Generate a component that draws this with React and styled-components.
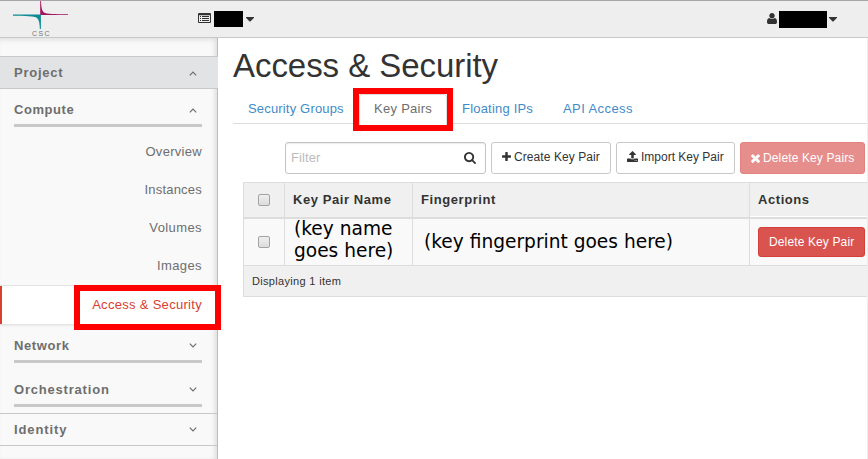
import React from "react";
import styled, { createGlobalStyle, css } from "styled-components";

const GlobalStyle = createGlobalStyle`
  * { box-sizing: border-box; }
  body {
    margin: 0;
    overflow: hidden;
    background: #fff;
    color: #333;
    font-family: "Liberation Sans", Arial, sans-serif;
    font-size: 13px;
  }
`;

const Page = styled.div`
  display: flex;
  flex-direction: column;
  width: 868px;
  height: 459px;
  overflow: hidden;
`;

const TopBar = styled.header`
  position: relative;
  z-index: 1;
  flex: none;
  display: flex;
  align-items: flex-start;
  height: 38px;
  padding: 0 31px 0 13px;
  background: #eee;
  border-top: 1px solid #a6a6a6;
  border-bottom: 1px solid #c8c8c8;
`;

const Brand = styled.div`
  display: flex;
  flex-direction: column;
  align-items: center;
  width: 56px;
  margin-right: 129px;
`;

const BrandName = styled.span`
  margin: 1px 0 0 1px;
  font-size: 7px;
  line-height: 7px;
  letter-spacing: 1.4px;
  color: #777;
`;

const TopMenu = styled.div`
  display: flex;
  align-items: flex-start;
  padding-top: 10px;
  margin-left: ${(p) => (p.$end ? "auto" : 0)};
`;

const Redacted = styled.span`
  width: ${(p) => p.$w}px;
  height: ${(p) => p.$h}px;
  margin: 0 ${(p) => p.$after}px 0 ${(p) => p.$gap}px;
  background: #000;
`;

const Glyph = styled.svg`
  display: block;
  flex: none;
  fill: currentColor;
  margin-top: ${(p) => p.$top || 0}px;
`;

const Body = styled.div`
  flex: 1;
  display: flex;
  min-height: 0;
`;

const Sidebar = styled.nav`
  flex: none;
  width: 218px;
  padding-top: 18px;
  background: #f9f9f9;
  border-right: 1px solid #bdbdbd;
  box-shadow: inset -4px 0 5px -2px #ddd, inset 0 5px 5px -3px #e2e2e2;
  color: #6e6e6e;
`;

const heading = css`
  display: flex;
  justify-content: space-between;
  font-size: 13px;
  font-weight: bold;
  line-height: 16px;
`;

const Dashboard = styled.div`
  ${heading}
  height: 33px;
  padding: 8px 20px 0 14px;
  border-top: 1px solid #c8c8c8;
  border-bottom: 1px solid #c8c8c8;
  ${(p) => p.$open && css`
    margin-right: -1px;
    padding-right: 21px;
    background: #e2e3e5;
  `}
`;

const Panel = styled.div`
  ${heading}
  height: ${(p) => p.$h}px;
  margin: ${(p) => p.$mt}px 15px 0 14px;
  padding-right: 5px;
  border-bottom: 3px solid #c9c9c9;
`;

const PanelList = styled.div`
  padding-top: 6px;
  margin-bottom: 13px;
`;

const SectionGap = styled.div`
  height: 6px;
`;

const Label = styled.span`
  letter-spacing: ${(p) => (p.$ls ? `${p.$ls}px` : "normal")};
  white-space: nowrap;
`;

const PanelLink = styled.div`
  position: relative;
  height: 38px;
  padding: 11px 15px 0 0;
  text-align: right;
  line-height: 16px;
  ${(p) => p.$active && css`
    height: 40px;
    background: #fff;
    color: #d9402f;
    border-top: 1px solid #e3e3e3;
    border-bottom: 1px solid #e3e3e3;
    box-shadow: inset 2px 0 #d9402f, 0 1px 2px #e8e8e8;
  `}
`;

const Highlight = styled.div`
  position: absolute;
  z-index: 2;
  left: ${(p) => p.$x}px;
  top: ${(p) => p.$y}px;
  width: ${(p) => p.$w}px;
  height: ${(p) => p.$h}px;
  border: 6px solid #f00;
`;

const Main = styled.main`
  flex: 1;
  min-width: 0;
  padding-left: 15px;
  overflow: hidden;
  border-right: 1px solid #eee;
`;

const Title = styled.h1`
  margin: 9px 0 9px;
  font-size: 33px;
  font-weight: normal;
  line-height: 38px;
  letter-spacing: -0.05px;
  color: #333;
`;

const Tabs = styled.div`
  display: flex;
  height: 30px;
  border-bottom: 1px solid #ddd;
`;

const Tab = styled.div`
  position: relative;
  height: 30px;
  padding: 7px 15px 0;
  line-height: 16px;
  color: #428bca;
  width: ${(p) => p.$w}px;
  ${(p) => p.$active && css`
    height: 31px;
    padding: 6px 14px 0;
    color: #6e6e6e;
    background: #fff;
    border: 1px solid #ddd;
    border-bottom: 0;
    border-radius: 3px 3px 0 0;
  `}
`;

const Toolbar = styled.div`
  display: flex;
  justify-content: flex-end;
  gap: 5px;
  padding: 18px 2px 8px 0;
`;

const FilterBox = styled.div`
  display: flex;
  justify-content: space-between;
  width: 201px;
  height: 32px;
  padding: 7px 9px 0 5px;
  border: 1px solid #c4c4c4;
  border-radius: 3px;
  box-shadow: inset 0 1px 1px #ececec;
  line-height: 16px;
  color: #bbb;
`;

const SearchMark = styled.span`
  color: #333;
`;

const Button = styled.button`
  display: flex;
  flex: none;
  gap: ${(p) => p.$gap ?? 3}px;
  width: ${(p) => p.$w}px;
  height: ${(p) => p.$h || 32}px;
  margin: 0;
  padding: ${(p) => p.$pt || 7}px 0 0 10px;
  border: 1px solid #c8c8c8;
  border-radius: 3px;
  background: #fff;
  color: #333;
  font: 12px/14px "Liberation Sans", Arial, sans-serif;
  ${(p) => p.$danger && css`
    color: #fff;
    background: #d9534f;
    border-color: #d43f3a;
  `}
  ${(p) => p.$disabled && css`opacity: 0.65;`}
`;

const Table = styled.div`
  width: 640px;
  margin-left: 10px;
  border: 1px solid #ddd;
`;

const Row = styled.div`
  display: grid;
  grid-template-columns: 40px 128px 337px 1fr;
  height: ${(p) => (p.$head ? 36 : 46)}px;
  background: ${(p) => (p.$head ? "#f0f0f0" : "#f9f9f9")};
  border-bottom: ${(p) => (p.$head ? 2 : 0)}px solid #ddd;
`;

const Cell = styled.div`
  padding: ${(p) => p.$pt || 0}px 0 0 8px;
  border-left: 1px solid #ddd;
  line-height: 16px;
  font-weight: ${(p) => (p.$bold ? "bold" : "normal")};
  white-space: nowrap;
  &:first-child {
    border-left: 0;
    padding-left: 14px;
  }
  ${(p) => p.$last && css`box-shadow: inset 0 -1px #fff;`}
`;

const Note = styled.div`
  margin: ${(p) => p.$y || 0}px 0 0 ${(p) => p.$x}px;
  font-family: "DejaVu Sans", sans-serif;
  font-size: 18.6px;
  line-height: 22px;
  color: #000;
`;

const Check = styled.div`
  width: 12px;
  height: 12px;
  border: 1px solid #a3a3a3;
  border-radius: 2px;
  background: linear-gradient(#efefef, #dcdcdc);
`;

const Footer = styled.div`
  height: 31px;
  padding: 8px 8px 0;
  border-top: 1px solid #ddd;
  background: #f0f0f0;
  font-size: 11px;
  line-height: 14px;
`;

const paths = {
  search:
    "M1216 832q0-185-131.5-316.5t-316.5-131.5-316.5 131.5-131.5 316.5 131.5 316.5 316.5 131.5 316.5-131.5 131.5-316.5zm512 832q0 52-38 90t-90 38q-54 0-90-38l-343-342q-179 124-399 124-143 0-273.5-55.5t-225-150-150-225-55.5-273.5 55.5-273.5 150-225 225-150 273.5-55.5 273.5 55.5 225 150 150 225 55.5 273.5q0 220-124 399l343 343q37 37 37 90z",
  plus:
    "M1600 736v192q0 40-28 68t-68 28h-416v416q0 40-28 68t-68 28h-192q-40 0-68-28t-28-68v-416h-416q-40 0-68-28t-28-68v-192q0-40 28-68t68-28h416v-416q0-40 28-68t68-28h192q40 0 68 28t28 68v416h416q40 0 68 28t28 68z",
  times:
    "M1490 1322q0 40-28 68l-136 136q-28 28-68 28t-68-28l-294-294-294 294q-28 28-68 28t-68-28l-136-136q-28-28-28-68t28-68l294-294-294-294q-28-28-28-68t28-68l136-136q28-28 68-28t68 28l294 294 294-294q28-28 68-28t68 28l136 136q28 28 28 68t-28 68l-294 294 294 294q28 28 28 68z",
  upload:
    "M1344 1472q0-26-19-45t-45-19-45 19-19 45 19 45 45 19 45-19 19-45zm256 0q0-26-19-45t-45-19-45 19-19 45 19 45 45 19 45-19 19-45zm128-224v320q0 40-28 68t-68 28h-1472q-40 0-68-28t-28-68v-320q0-40 28-68t68-28h427q21 56 70.5 92t110.5 36h256q61 0 110.5-36t70.5-92h427q40 0 68 28t28 68zm-325-648q-17 40-59 40h-256v448q0 26-19 45t-45 19h-256q-26 0-45-19t-19-45v-448h-256q-42 0-59-40-17-39 14-69l448-448q18-19 45-19t45 19l448 448q31 30 14 69z",
  user:
    "M1600 1405q0 120-73 189.5t-194 69.5h-874q-121 0-194-69.5t-73-189.5q0-53 3.5-103.5t14-109 26.5-108.5 43-97.5 62-81 85.5-53.5 111.5-20q9 0 42 21.5t74.5 48 108 48 133.5 21.5 133.5-21.5 108-48 74.5-48 42-21.5q61 0 111.5 20t85.5 53.5 62 81 43 97.5 26.5 108.5 14 109 3.5 103.5zm-320-893q0 159-112.5 271.5t-271.5 112.5-271.5-112.5-112.5-271.5 112.5-271.5 271.5-112.5 271.5 112.5 112.5 271.5z",
};

const boxes = {
  search: "64 128 1664 1664",
  plus: "192 128 1408 1408",
  times: "302 340 1188 1214",
  upload: "64 64 1664 1600",
  user: "192 128 1408 1536",
};

const Icon = ({ name, w, h, top }) => (
  <Glyph width={w} height={h} viewBox={boxes[name]} preserveAspectRatio="none" $top={top}>
    <path d={paths[name]} />
  </Glyph>
);

const Caret = () => (
  <Glyph width="8" height="5" viewBox="0 0 8 5" $top={6}>
    <path d="M0 0h8v.8L4.4 4.4h-.8L0 .8z" />
  </Glyph>
);

const ListIcon = () => (
  <Glyph width="13" height="10" viewBox="0 0 13 10" $top={2}>
    <path
      fillRule="evenodd"
      d="M1 0h11a1 1 0 0 1 1 1v8a1 1 0 0 1-1 1H1a1 1 0 0 1-1-1V1a1 1 0 0 1 1-1zM1 2.2V9h11V2.2z"
    />
    <path d="M2 3h1v1H2zM4 3h7v1H4zM2 5h1v1H2zM4 5h7v1H4zM2 7h1v1H2zM4 7h7v1H4z" />
  </Glyph>
);

const Angle = ({ up }) => (
  <Glyph width="8" height="5" viewBox="0 0 8 5" $top={up ? 6 : 5}>
    <path
      d={up ? "M.8 4.3L4 1.1l3.2 3.2" : "M.8.7L4 3.9 7.2.7"}
      fill="none"
      stroke="currentColor"
      strokeWidth="1.2"
    />
  </Glyph>
);

const Logo = () => (
  <Glyph width="56" height="28" viewBox="0 0 56 28">
    <path d="M27.2 0h.8C28.3 6 28.8 9.8 31 11.4 33.5 12.9 42 13.1 55 13.2v.9H27.2z" fill="#a2145f" />
    <path d="M0 13.5h27.9V28h-1C26.6 22.4 26.2 18.8 24 17 21.5 15.2 12 14.9 0 14.8z" fill="#0b8a95" />
  </Glyph>
);

const SectionPanel = ({ name, ls, open, mt, h }) => (
  <Panel $mt={mt} $h={h}>
    <Label $ls={ls}>{name}</Label>
    <Angle up={open} />
  </Panel>
);

export default function App() {
  return (
    <Page>
      <GlobalStyle />
      <TopBar>
        <Brand>
          <Logo />
          <BrandName>CSC</BrandName>
        </Brand>
        <TopMenu>
          <ListIcon />
          <Redacted $w={29} $h={16} $gap={3} $after={3} />
          <Caret />
        </TopMenu>
        <TopMenu $end>
          <Icon name="user" w={10} h={11} top={2} />
          <Redacted $w={48} $h={17} $gap={2} $after={2} />
          <Caret />
        </TopMenu>
      </TopBar>
      <Body>
        <Sidebar>
          <Dashboard $open>
            <Label $ls={0.75}>Project</Label>
            <Angle up />
          </Dashboard>
          <SectionPanel name="Compute" ls={0.55} open mt={13} h={25} />
          <PanelList>
            <PanelLink><Label $ls={0.3}>Overview</Label></PanelLink>
            <PanelLink><Label $ls={0.22}>Instances</Label></PanelLink>
            <PanelLink><Label $ls={0.4}>Volumes</Label></PanelLink>
            <PanelLink><Label $ls={0.4}>Images</Label></PanelLink>
            <PanelLink $active>
              <Label $ls={0.3}>Access &amp; Security</Label>
              <Highlight $x={74} $y={-1} $w={147} $h={45} />
            </PanelLink>
          </PanelList>
          <SectionPanel name="Network" ls={0.6} mt={0} h={25} />
          <SectionPanel name="Orchestration" ls={0.8} mt={19} h={25} />
          <SectionGap />
          <Dashboard>
            <Label $ls={0.9}>Identity</Label>
            <Angle />
          </Dashboard>
        </Sidebar>
        <Main>
          <Title>Access &amp; Security</Title>
          <Tabs>
            <Tab $w={126}><Label $ls={0.17}>Security Groups</Label></Tab>
            <Tab $active $w={88}>
              <Label $ls={0.28}>Key Pairs</Label>
              <Highlight $x={-7} $y={-7} $w={100} $h={43} />
            </Tab>
            <Tab $w={101}><Label $ls={0.2}>Floating IPs</Label></Tab>
            <Tab $w={100}><Label $ls={0.42}>API Access</Label></Tab>
          </Tabs>
          <Toolbar>
            <FilterBox>
              <Label $ls={0.1}>Filter</Label>
              <SearchMark><Icon name="search" w={12} h={12} top={2} /></SearchMark>
            </FilterBox>
            <Button $w={120}>
              <Icon name="plus" w={9} h={9} top={2} />
              <Label $ls={0.08}>Create Key Pair</Label>
            </Button>
            <Button $w={119}>
              <Icon name="upload" w={11} h={11} top={1} />
              <Label>Import Key Pair</Label>
            </Button>
            <Button $w={125} $danger $disabled $pt={8}>
              <Icon name="times" w={9} h={9} top={3} />
              <Label $ls={0.13}>Delete Key Pairs</Label>
            </Button>
          </Toolbar>
          <Table>
            <Row $head>
              <Cell $pt={11}><Check /></Cell>
              <Cell $pt={9} $bold><Label $ls={0.57}>Key Pair Name</Label></Cell>
              <Cell $pt={9} $bold><Label $ls={0.57}>Fingerprint</Label></Cell>
              <Cell $pt={9} $bold $last><Label $ls={0.57}>Actions</Label></Cell>
            </Row>
            <Row>
              <Cell $pt={17}><Check /></Cell>
              <Cell><Note $x={1} $y={-1}>(key name<br />goes here)</Note></Cell>
              <Cell $pt={12}><Note $x={3}>(key fingerprint goes here)</Note></Cell>
              <Cell $pt={8}>
                <Button $danger $w={107} $h={30}><Label $ls={0.13}>Delete Key Pair</Label></Button>
              </Cell>
            </Row>
            <Footer><Label $ls={0.32}>Displaying 1 item</Label></Footer>
          </Table>
        </Main>
      </Body>
    </Page>
  );
}
